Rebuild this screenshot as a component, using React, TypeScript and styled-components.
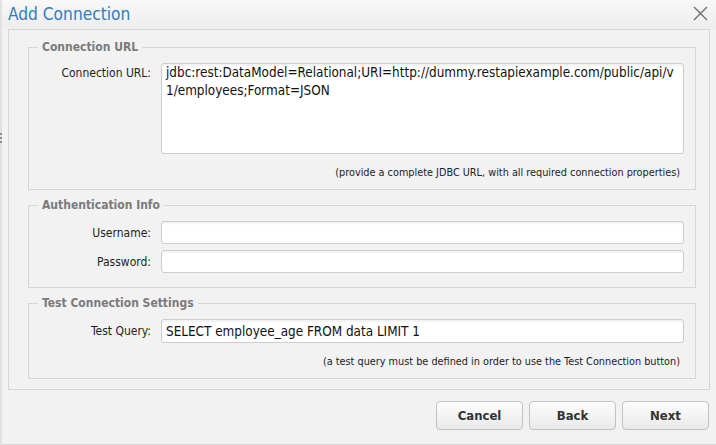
import React from 'react'
import styled, { createGlobalStyle } from 'styled-components'

const GlobalStyle = createGlobalStyle`
  html, body {
    margin: 0;
    padding: 0;
    background: #f2f2f2;
  }
  body {
    font-family: 'DejaVu Sans Condensed', 'DejaVu Sans', Tahoma, sans-serif;
    font-stretch: condensed;
  }
`

const FONT = `'DejaVu Sans Condensed', 'DejaVu Sans', Tahoma, sans-serif`

const Dialog = styled.div`
  position: relative;
  width: 716px;
  height: 445px;
  box-sizing: border-box;
  display: flex;
  flex-direction: column;
  background: #f2f2f2;
  border-left: 2px solid #e2e2e2;
  border-bottom: 1px solid #d6d6d6;
  font-family: ${FONT};
`

// little resize grip on the left edge
const Grip = styled.div`
  position: absolute;
  left: -2px;
  top: 133px;
  display: flex;
  flex-direction: column;
  gap: 2px;

  span {
    width: 2px;
    height: 2px;
    background: #8c8c8c;
  }
`

const TitleBar = styled.div`
  height: 29px;
  display: flex;
  align-items: center;
  justify-content: space-between;
  padding: 0 8px 0 6px;
  background: linear-gradient(#f8f8f8, #ededed);
`

const Title = styled.h1`
  margin: 0;
  font-family: ${FONT};
  font-weight: normal;
  font-size: 17.2px;
  line-height: 22px;
  color: #2f7cc0;
  padding-bottom: 1px;
`

const CloseButton = styled.button`
  width: 16px;
  height: 16px;
  padding: 0;
  border: none;
  background: transparent;
  display: flex;
  align-items: center;
  justify-content: center;
  margin-top: -2px;
  cursor: pointer;
`

const Panel = styled.div`
  margin: 0 6px 0 6px;
  height: 361px;
  box-sizing: border-box;
  border: 1px solid #d6d6d6;
  padding: 10px 13px 8px 19px;
  display: flex;
  flex-direction: column;
  gap: 8px;
`

const Group = styled.fieldset<{ $bottom: number }>`
  margin: 0;
  min-width: 0;
  border: 1px solid #d6d6d6;
  padding: 9px 11px ${({ $bottom }) => $bottom}px 9px;
  display: flex;
  flex-direction: column;
  gap: 6px;
`

const Legend = styled.legend`
  padding: 0 4px;
  font-family: ${FONT};
  font-weight: bold;
  font-size: 12px;
  line-height: 14px;
  color: #7b7b7b;
`

const Row = styled.div<{ $top?: boolean }>`
  display: grid;
  grid-template-columns: 113px 1fr;
  column-gap: 10px;
  align-items: ${({ $top }) => ($top ? 'start' : 'center')};
`

const Label = styled.label<{ $top?: boolean }>`
  text-align: right;
  font-size: 12px;
  color: #1e1e1e;
  padding-top: ${({ $top }) => ($top ? '3px' : '0')};
`

const fieldBase = `
  box-sizing: border-box;
  width: 100%;
  border: 1px solid #cdcdcd;
  border-radius: 3px;
  background: #fff;
  box-shadow: inset 0 2px 2px rgba(0, 0, 0, 0.05);
  font-family: ${FONT};
  font-stretch: condensed;
  font-size: 13.4px;
  color: #111;
  outline: none;
`

const TextInput = styled.input<{ $h: number }>`
  ${fieldBase}
  height: ${({ $h }) => $h}px;
  padding: 0 4px;
`

const TextArea = styled.textarea`
  ${fieldBase}
  display: block;
  height: 91px;
  padding: 0 4px;
  line-height: 18px;
  resize: none;
  word-break: break-all;
  overflow: hidden;
`

const Hint = styled.div`
  margin-top: 6px;
  padding-right: 4px;
  text-align: right;
  font-size: 10.8px;
  line-height: 13px;
  color: #1c1c2a;
`

const Footer = styled.div`
  flex: 1;
  display: flex;
  justify-content: flex-end;
  align-items: flex-start;
  gap: 6px;
  padding: 11px 7px 0 0;
`

const Button = styled.button`
  width: 87px;
  height: 29px;
  border: 1px solid #c2c2c2;
  border-radius: 4px;
  background: linear-gradient(#fdfdfd, #e9e9e9);
  font-family: ${FONT};
  font-stretch: condensed;
  font-weight: bold;
  font-size: 13px;
  color: #333;
  cursor: pointer;
`

const CloseIcon = () => (
  <svg width="15" height="15" viewBox="0 0 15 15">
    <path d="M1 1 L14 14 M14 1 L1 14" stroke="#6e6e6e" strokeWidth="1.4" fill="none" />
  </svg>
)

export default function App() {
  const [url, setUrl] = React.useState(
    'jdbc:rest:DataModel=Relational;URI=http://dummy.restapiexample.com/public/api/v1/employees;Format=JSON'
  )
  const [user, setUser] = React.useState('')
  const [pass, setPass] = React.useState('')
  const [query, setQuery] = React.useState('SELECT employee_age FROM data LIMIT 1')

  return (
    <>
      <GlobalStyle />
      <Dialog>
        <Grip>
          <span />
          <span />
          <span />
        </Grip>
        <TitleBar>
          <Title>Add Connection</Title>
          <CloseButton aria-label="Close">
            <CloseIcon />
          </CloseButton>
        </TitleBar>
        <Panel>
          <Group $bottom={10}>
            <Legend>Connection URL</Legend>
            <Row $top>
              <Label $top>Connection URL:</Label>
              <TextArea value={url} onChange={(e) => setUrl(e.target.value)} />
            </Row>
            <Hint>(provide a complete JDBC URL, with all required connection properties)</Hint>
          </Group>
          <Group $bottom={14}>
            <Legend>Authentication Info</Legend>
            <Row>
              <Label>Username:</Label>
              <TextInput $h={23} value={user} onChange={(e) => setUser(e.target.value)} />
            </Row>
            <Row>
              <Label>Password:</Label>
              <TextInput $h={23} type="password" value={pass} onChange={(e) => setPass(e.target.value)} />
            </Row>
          </Group>
          <Group $bottom={10}>
            <Legend>Test Connection Settings</Legend>
            <Row>
              <Label>Test Query:</Label>
              <TextInput $h={24} value={query} onChange={(e) => setQuery(e.target.value)} />
            </Row>
            <Hint>(a test query must be defined in order to use the Test Connection button)</Hint>
          </Group>
        </Panel>
        <Footer>
          <Button>Cancel</Button>
          <Button>Back</Button>
          <Button>Next</Button>
        </Footer>
      </Dialog>
    </>
  )
}
